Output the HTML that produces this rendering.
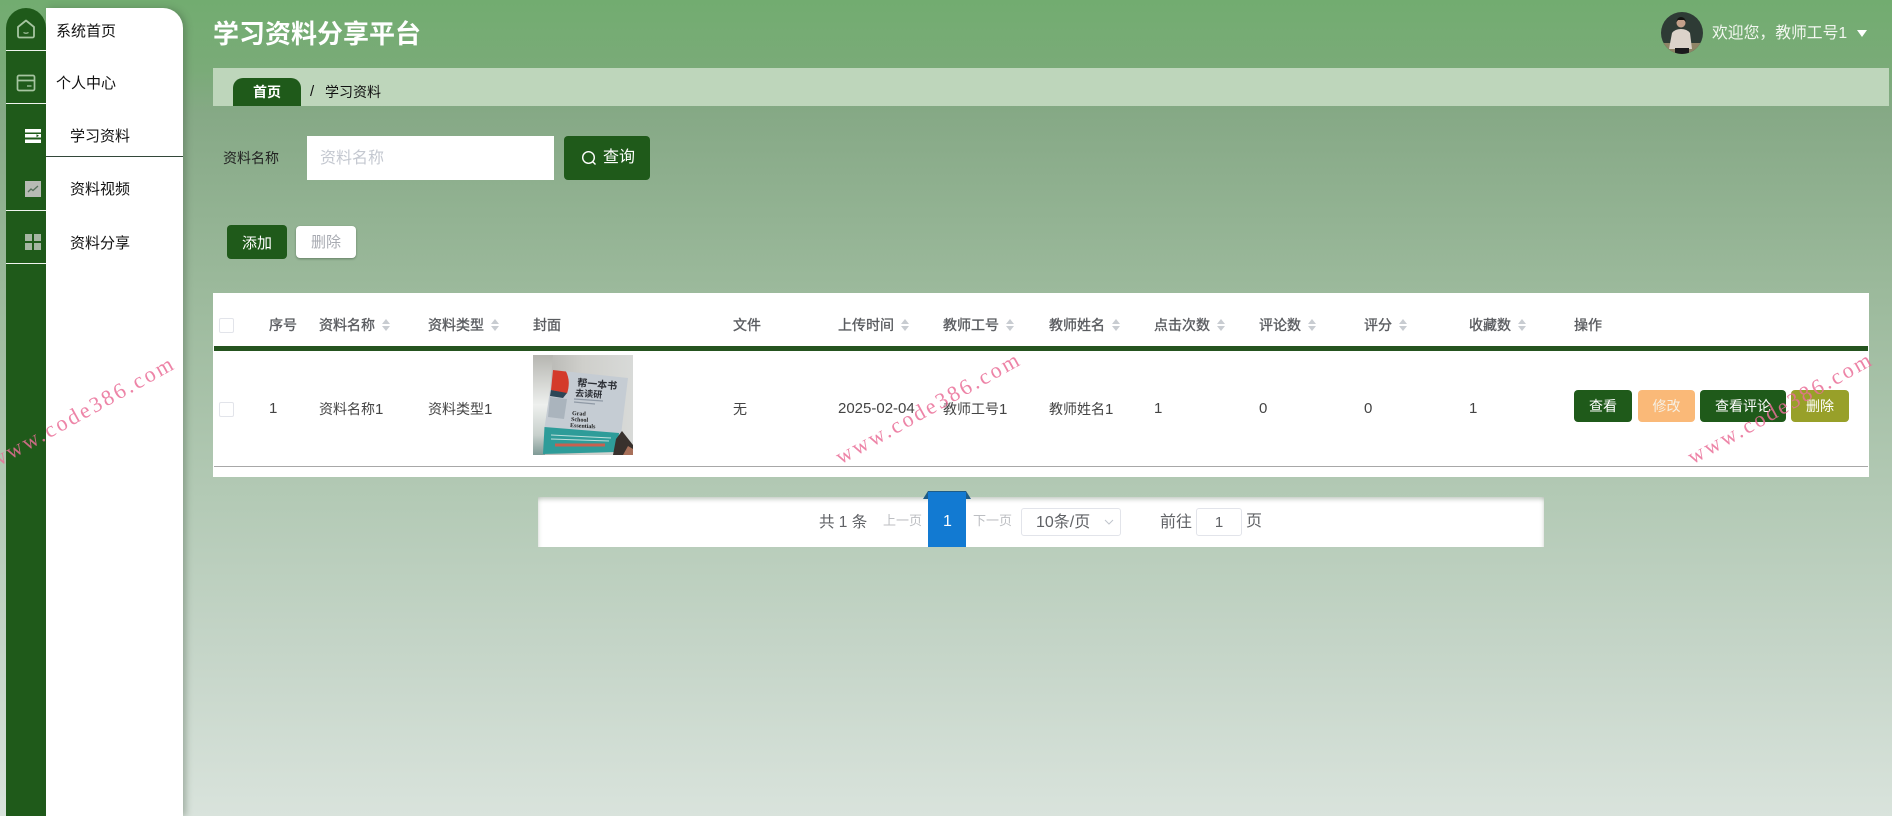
<!DOCTYPE html>
<html lang="zh">
<head>
<meta charset="utf-8">
<title>学习资料分享平台</title>
<style>
html,body{margin:0;padding:0;width:1892px;height:816px;overflow:hidden}
body{position:relative;font-family:"Liberation Sans","Noto Sans CJK SC",sans-serif;font-size:14px;color:#222;
background:linear-gradient(180deg,#72ac70 0px,#7aab78 70px,#86a986 115px,#9bb99b 285px,#b2c9b4 490px,#c5d5c8 650px,#d9e3dc 816px)}
.a{position:absolute;white-space:nowrap}
.t{position:absolute;white-space:nowrap;line-height:20px;transform:translateY(-10px)}
.rail{position:absolute;left:6px;top:8px;width:40px;height:808px;background:#1f5a1a;border-radius:20px 20px 0 0}
.panel{position:absolute;left:46px;top:8px;width:137px;height:808px;background:#fff;border-radius:0 20px 0 0;box-shadow:3px 0 7px rgba(60,80,60,.35)}
.sl{position:absolute;left:6px;width:40px;height:1px;background:#f0f5ef}
.th{position:absolute;top:325px;line-height:20px;transform:translateY(-10px);color:#5a5c60;-webkit-text-stroke:.35px #5a5c60;white-space:nowrap;font-size:14px}
.td{position:absolute;top:409px;line-height:20px;transform:translateY(-10px);color:#444;white-space:nowrap;font-size:14px}
.sort{display:inline-block;width:8px;height:12px;margin-left:7px;vertical-align:-1px;position:relative}
.sort:before,.sort:after{content:"";position:absolute;left:0;border-left:4px solid transparent;border-right:4px solid transparent}
.sort:before{top:0;border-bottom:5px solid #c8ccd1}
.sort:after{bottom:0;border-top:5px solid #c8ccd1}
.btn{position:absolute;top:390px;height:32px;line-height:33px;text-align:center;color:#fff;font-size:14px;border-radius:4px}
.cb{position:absolute;left:219px;width:13px;height:13px;border:1px solid #e2e4ea;background:#fff;border-radius:2px}
.wm{position:absolute;font-family:"Liberation Serif",serif;font-size:22px;letter-spacing:2.6px;color:#ea6f98;white-space:nowrap;transform-origin:0 100%;transform:rotate(-29deg);opacity:.85;z-index:20;line-height:24px}
</style>
</head>
<body>

<div class="rail"></div>
<div class="panel"></div>
<div class="sl" style="top:50px"></div>
<div class="sl" style="top:103px"></div>
<div class="sl" style="top:210px"></div>
<div class="sl" style="top:263px"></div>
<div class="a" style="left:46px;top:156px;width:137px;height:1px;background:#33483a"></div>

<svg class="a" style="left:16px;top:19px" width="20" height="20" viewBox="0 0 20 20" fill="none" stroke="#a6c5a1" stroke-width="1.800" stroke-linejoin="round"><path d="M2 8 10 1.500 18 8V17a1.500 1.500 0 0 1-1.500 1.500H3.500A1.500 1.500 0 0 1 2 17z"/><path d="M7.500 13.500q2.500 1.500 5 0" stroke-width="1.300"/></svg>
<svg class="a" style="left:16px;top:74px" width="20" height="18" viewBox="0 0 20 18" fill="none" stroke="#a6c5a1" stroke-width="1.700"><rect x="1.500" y="1.500" width="17" height="15" rx="1.500"/><path d="M1.500 6.500h17"/><path d="M11 12h4.500" stroke-width="1.300"/></svg>
<svg class="a" style="left:25px;top:129px" width="16" height="14" viewBox="0 0 16 14" fill="#fff"><rect width="16" height="3.500"/><rect y="5" width="16" height="3.500"/><rect y="10.500" width="16" height="3.500"/><path d="M11.500 5.200l2.500 1.500-2.500 1.500z" fill="#1f5a1a"/></svg>
<svg class="a" style="left:25px;top:181px" width="16" height="16" viewBox="0 0 16 16"><rect width="16" height="16" fill="#b7bbb4"/><path d="M3 11l3-3 2 1.500L13 5" fill="none" stroke="#55705a" stroke-width="1.300"/></svg>
<svg class="a" style="left:25px;top:234px" width="16" height="16" viewBox="0 0 16 16" fill="#a5b5a2"><rect width="7" height="7"/><rect x="9" width="7" height="7"/><rect y="9" width="7" height="7"/><rect x="9" y="9" width="7" height="7"/></svg>

<div class="t" style="left:56px;top:32px;font-size:15px;color:#111">系统首页</div>
<div class="t" style="left:56px;top:84px;font-size:15px;color:#111">个人中心</div>
<div class="t" style="left:70px;top:137px;font-size:15px;color:#111">学习资料</div>
<div class="t" style="left:70px;top:190px;font-size:15px;color:#111">资料视频</div>
<div class="t" style="left:70px;top:244px;font-size:15px;color:#111">资料分享</div>

<div class="t" style="left:213px;top:34px;font-size:26px;font-weight:700;color:#fff">学习资料分享平台</div>

<svg class="a" style="left:1661px;top:12px" width="42" height="42" viewBox="0 0 42 42">
<defs><clipPath id="c"><circle cx="21" cy="21" r="21"/></clipPath></defs>
<g clip-path="url(#c)"><rect width="42" height="42" fill="#2e3b35"/><rect y="31" width="42" height="11" fill="#8f8466"/><path d="M8 37l3-16q3-4 9-4t9 4l2 16z" fill="#dcd3ca"/><circle cx="20" cy="11" r="4.500" fill="#c3a08a"/><path d="M15.500 10q.5-5 4.500-5t5 5l-2-2h-6z" fill="#151512"/><path d="M14 36h14v6H14z" fill="#1b1a1c"/></g></svg>
<div class="t" style="left:1712px;top:34px;font-size:15.800px;color:#f2f7f0">欢迎您，教师工号1</div>
<div class="a" style="left:1857px;top:30px;width:0;height:0;border-left:5.500px solid transparent;border-right:5.500px solid transparent;border-top:7px solid #fff"></div>

<div class="a" style="left:213px;top:68px;width:1676px;height:38px;background:#bed6bb"></div>
<div class="a" style="left:233px;top:78px;width:68px;height:28px;background:#1f5a1a;border-radius:10px 10px 0 0"></div>
<div class="t" style="left:253px;top:92px;font-weight:700;color:#fff;font-size:14px">首页</div>
<div class="t" style="left:310px;top:92px;color:#111;font-size:15px">/</div>
<div class="t" style="left:325px;top:92px;color:#111;font-size:14px">学习资料</div>

<div class="t" style="left:223px;top:158px;color:#222;font-size:14px">资料名称</div>
<div class="a" style="left:307px;top:136px;width:247px;height:44px;background:#fff"></div>
<div class="t" style="left:320px;top:159px;font-size:16px;color:#c4c8d0">资料名称</div>
<div class="a" style="left:564px;top:136px;width:86px;height:44px;background:#1f5a1a;border-radius:4px"></div>
<svg class="a" style="left:581px;top:150px" width="16" height="16" viewBox="0 0 16 16" fill="none" stroke="#fff" stroke-width="1.400"><circle cx="7.500" cy="7.500" r="5.800"/><path d="M11.800 11.800 14.500 14.500"/></svg>
<div class="t" style="left:603px;top:158px;font-size:16px;color:#fff">查询</div>

<div class="a" style="left:227px;top:225px;width:60px;height:34px;line-height:37px;background:#1f5a1a;border-radius:4px;color:#fff;text-align:center;font-size:15px">添加</div>
<div class="a" style="left:296px;top:226px;width:60px;height:32px;line-height:34px;background:#fff;border-radius:4px;color:#a8abb2;text-align:center;font-size:15px;box-shadow:0 1px 2px rgba(40,60,40,.45)">删除</div>

<div class="a" style="left:213px;top:293px;width:1656px;height:184px;background:#fff"></div>
<div class="a" style="left:214px;top:346px;width:1654px;height:5px;background:#25541f"></div>
<div class="a" style="left:214px;top:466px;width:1654px;height:1px;background:#a8a8a8"></div>

<div class="cb" style="top:318px"></div>
<div class="th" style="left:269px">序号</div>
<div class="th" style="left:319px">资料名称<span class="sort"></span></div>
<div class="th" style="left:428px">资料类型<span class="sort"></span></div>
<div class="th" style="left:533px">封面</div>
<div class="th" style="left:733px">文件</div>
<div class="th" style="left:838px">上传时间<span class="sort"></span></div>
<div class="th" style="left:943px">教师工号<span class="sort"></span></div>
<div class="th" style="left:1049px">教师姓名<span class="sort"></span></div>
<div class="th" style="left:1154px">点击次数<span class="sort"></span></div>
<div class="th" style="left:1259px">评论数<span class="sort"></span></div>
<div class="th" style="left:1364px">评分<span class="sort"></span></div>
<div class="th" style="left:1469px">收藏数<span class="sort"></span></div>
<div class="th" style="left:1574px">操作</div>

<div class="cb" style="top:402px"></div>
<div class="td" style="left:269px;font-size:15px">1</div>
<div class="td" style="left:319px">资料名称<span style="font-size:15px">1</span></div>
<div class="td" style="left:428px">资料类型<span style="font-size:15px">1</span></div>
<div class="td" style="left:733px">无</div>
<div class="td" style="left:838px;font-size:15px">2025-02-04</div>
<div class="td" style="left:943px">教师工号<span style="font-size:15px">1</span></div>
<div class="td" style="left:1049px">教师姓名<span style="font-size:15px">1</span></div>
<div class="td" style="left:1154px;font-size:15px">1</div>
<div class="td" style="left:1259px;font-size:15px">0</div>
<div class="td" style="left:1364px;font-size:15px">0</div>
<div class="td" style="left:1469px;font-size:15px">1</div>

<svg class="a" style="left:533px;top:355px" width="100" height="100" viewBox="0 0 100 100">
<defs>
<linearGradient id="bg" x1="0" y1="0" x2="1" y2="0"><stop offset="0" stop-color="#b0b0ac"/><stop offset=".5" stop-color="#cfcfcb"/><stop offset="1" stop-color="#d8dad8"/></linearGradient>
<linearGradient id="lf" x1="0" y1="0" x2="0" y2="1"><stop offset="0" stop-color="#b5b5b0"/><stop offset=".5" stop-color="#eef0ee"/><stop offset=".8" stop-color="#c8d0cc"/><stop offset="1" stop-color="#7f9a96"/></linearGradient>
</defs>
<rect width="100" height="100" fill="url(#bg)"/>
<path d="M0 0H20L12 100H0z" fill="url(#lf)"/>
<path d="M20 15 95 23 88 80 11 76z" fill="#c5ccd3"/>
<path d="M11.500 72 86 78 84 97 10 99z" fill="#2e9c99"/>
<path d="M20 15 33 16.500q5 10 1 22L18 35z" fill="#d43a2a"/>
<path d="M18 35 34 38 30 43 17 41z" fill="#2c4656"/>
<path d="M17 42 34 44 31 64 15 62z" fill="#aab4bd"/>
<text x="44" y="31" font-size="10" font-weight="700" fill="#2a2d33" font-family="Noto Sans CJK SC,sans-serif" transform="rotate(5 44 31)">帮一本书</text>
<text x="42" y="41" font-size="9" font-weight="700" fill="#2a2d33" font-family="Noto Sans CJK SC,sans-serif" transform="rotate(4 42 41)">去读研</text>
<path d="M41 44 70 46M41 47 62 49" stroke="#8f99a5" stroke-width="1.300"/>
<text x="39" y="60" font-size="6" font-weight="700" fill="#222" font-family="Liberation Serif,serif" transform="rotate(3 39 60)">Grad</text>
<text x="38" y="66" font-size="6" font-weight="700" fill="#222" font-family="Liberation Serif,serif" transform="rotate(3 38 66)">School</text>
<text x="37" y="72" font-size="6" font-weight="700" fill="#222" font-family="Liberation Serif,serif" transform="rotate(3 37 72)">Essentials</text>
<path d="M18 80 78 83M18 84 76 86" stroke="#bfe0dc" stroke-width="1"/>
<rect x="22" y="88.500" width="50" height="3" fill="#c9604f"/>
<path d="M80 100 83 84 89 76 100 90V100z" fill="#38312d"/>
<path d="M90 100 95 91 100 94V100z" fill="#a8705a"/>
</svg>

<div class="btn" style="left:1574px;width:58px;background:#1f5a1a">查看</div>
<div class="btn" style="left:1638px;width:57px;background:#fab978;color:#f6f0e4">修改</div>
<div class="btn" style="left:1700px;width:86px;background:#1f5a1a">查看评论</div>
<div class="btn" style="left:1791px;width:58px;background:#98a029">删除</div>

<div class="a" style="left:538px;top:497px;width:1006px;height:50px;background:#fff;box-shadow:inset 0 5px 5px -3px rgba(110,130,110,.45),inset 5px 0 5px -5px rgba(110,130,110,.3),inset -5px 0 5px -5px rgba(110,130,110,.3)"></div>
<div class="a" style="left:923px;top:491px;width:48px;height:8px;background:#1d5c88;clip-path:polygon(5px 0,43px 0,48px 8px,0 8px)"></div>
<div class="a" style="left:928px;top:492px;width:38px;height:55px;background:#127ad2"></div>
<div class="t" style="left:819px;top:523px;color:#606266;font-size:15.500px">共 1 条</div>
<div class="t" style="left:883px;top:521px;color:#bcbec2;font-size:13px">上一页</div>
<div class="t" style="left:943px;top:522px;color:#fff;font-size:16px">1</div>
<div class="t" style="left:973px;top:521px;color:#bcbec2;font-size:13px">下一页</div>
<div class="a" style="left:1021px;top:508px;width:98px;height:26px;border:1px solid #e2e4ea;border-radius:3px;background:#fff"></div>
<div class="t" style="left:1036px;top:523px;color:#606266;font-size:16px">10条/页</div>
<svg class="a" style="left:1104px;top:518px" width="10" height="8" viewBox="0 0 10 8" fill="none" stroke="#c0c4cc" stroke-width="1"><path d="M1 2l4 4 4-4"/></svg>
<div class="t" style="left:1160px;top:523px;color:#606266;font-size:16px">前往</div>
<div class="a" style="left:1196px;top:508px;width:44px;height:26px;line-height:28px;border:1px solid #e2e4ea;border-radius:3px;background:#fff;text-align:center;color:#606266;font-size:15px">1</div>
<div class="t" style="left:1246px;top:522px;color:#606266;font-size:16px">页</div>

<div class="wm" style="left:-3px;top:449px">www.code386.com</div>
<div class="wm" style="left:843px;top:445px">www.code386.com</div>
<div class="wm" style="left:1695px;top:445px">www.code386.com</div>

</body>
</html>
